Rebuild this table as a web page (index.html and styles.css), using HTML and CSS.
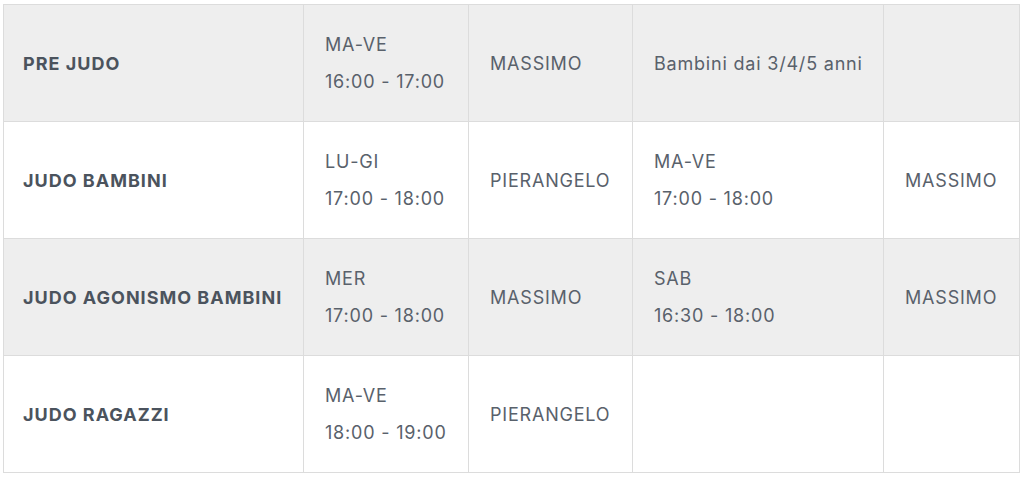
FILE: index.html
```html
<!DOCTYPE html>
<html lang="it">
<head>
<meta charset="utf-8">
<link rel="stylesheet" href="styles.css">
<title>Orari</title>
</head>
<body>
<div class="wrap">
<table class="schedule">
  <colgroup>
    <col class="c1"><col class="c2"><col class="c3"><col class="c4"><col class="c5">
  </colgroup>
  <tbody>
    <tr class="alt">
      <td class="name">PRE JUDO</td>
      <td>MA-VE<br>16:00 - 17:00</td>
      <td>MASSIMO</td>
      <td>Bambini dai 3/4/5 anni</td>
      <td></td>
    </tr>
    <tr>
      <td class="name">JUDO BAMBINI</td>
      <td>LU-GI<br>17:00 - 18:00</td>
      <td>PIERANGELO</td>
      <td>MA-VE<br>17:00 - 18:00</td>
      <td>MASSIMO</td>
    </tr>
    <tr class="alt">
      <td class="name">JUDO AGONISMO BAMBINI</td>
      <td>MER<br>17:00 - 18:00</td>
      <td>MASSIMO</td>
      <td>SAB<br>16:30 - 18:00</td>
      <td>MASSIMO</td>
    </tr>
    <tr>
      <td class="name">JUDO RAGAZZI</td>
      <td>MA-VE<br>18:00 - 19:00</td>
      <td>PIERANGELO</td>
      <td></td>
      <td></td>
    </tr>
  </tbody>
</table>
</div>
</body>
</html>
```

FILE: styles.css
```css
html, body {
  margin: 0;
  padding: 0;
  background: #ffffff;
}
.wrap {
  padding: 4px 4px 0 3px;
}
.schedule {
  width: 1016px;
  border-collapse: collapse;
  table-layout: fixed;
  font-family: Inter, "Noto Sans", sans-serif;
  font-size: 18px;
  line-height: 37px;
  letter-spacing: 0.8px;
  color: #59616b;
}
.c1 { width: 300px; }
.c2 { width: 165px; }
.c3 { width: 164px; }
.c4 { width: 251px; }
.c5 { width: 136px; }
.schedule td {
  border: 1px solid #dcdcdc;
  padding: 21px 12px 21px 21px;
  height: 74px;
  vertical-align: middle;
  white-space: nowrap;
}
.schedule tr.alt td {
  background: #eeeeee;
}
.schedule td.name {
  font-weight: 700;
  color: #4b535d;
  letter-spacing: 1px;
  padding-left: 19px;
}
```
